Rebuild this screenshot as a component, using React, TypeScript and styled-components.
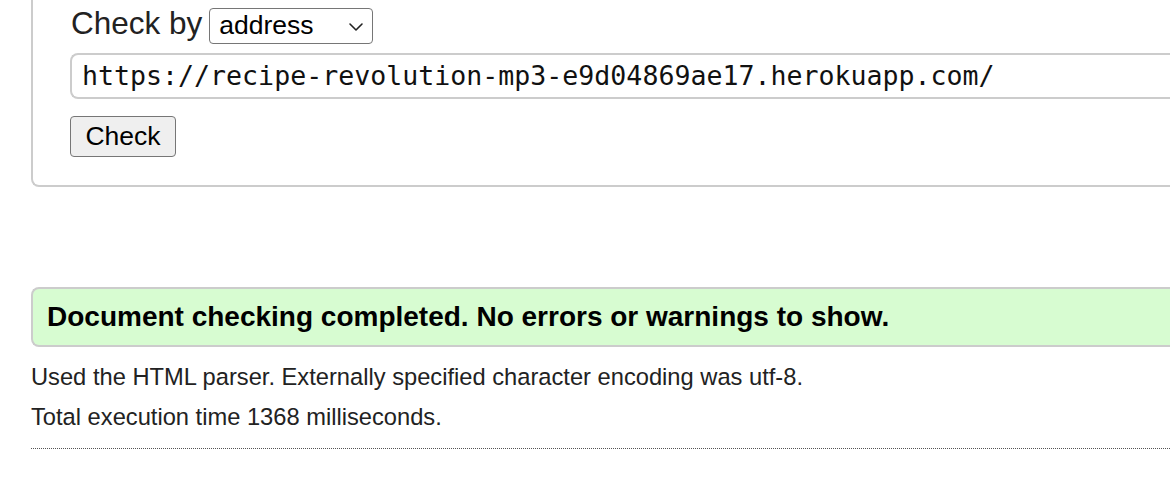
import React from "react"
import styled, { createGlobalStyle } from "styled-components"

const GlobalStyle = createGlobalStyle`
    html, body {
        margin: 0;
        padding: 0;
        background: #fff;
        overflow: hidden;
    }
    body {
        font-family: "Liberation Sans", Arial, Helvetica, sans-serif;
        color: #222;
    }
`

// ── Layout ────────────────────────────────────────────────────────────────────

const Page = styled.div`
    width: 1170px;
    height: 484px;
    padding-left: 31px;
    box-sizing: border-box;
`

const Form = styled.fieldset`
    margin: 0;
    padding: 5px 0 28px 37px;
    border: 2px solid #ccc;
    border-top: none;
    border-right: none;
    border-radius: 0 0 0 8px;
    display: flex;
    flex-direction: column;
    align-items: flex-start;
`

const CheckByRow = styled.div`
    display: flex;
    align-items: baseline;
    gap: 7px;
    margin-left: 1px;
`

const Label = styled.label`
    font-size: 31.5px;
    color: #222;
`

const SelectBox = styled.div`
    position: relative;
    box-sizing: border-box;
    width: 164px;
    height: 36px;
    border: 1px solid #767676;
    border-radius: 4px;
    background: #fff;
    display: flex;
    align-items: center;
    padding-left: 9px;
    font-size: 26.5px;
    color: #000;
`

const Chevron = styled.svg`
    position: absolute;
    right: 8px;
    top: 13px;
`

const UrlInput = styled.div`
    box-sizing: border-box;
    align-self: stretch;
    height: 46px;
    margin-top: 9px;
    border: 2px solid #ccc;
    border-right: none;
    border-radius: 8px 0 0 8px;
    padding-left: 10px;
    display: flex;
    align-items: center;
    font-family: "DejaVu Sans Mono", "Liberation Mono", monospace;
    font-size: 26.6px;
    color: #111;
    white-space: nowrap;
    overflow: hidden;
`

const CheckButton = styled.button`
    box-sizing: border-box;
    width: 106px;
    height: 41px;
    margin-top: 17px;
    border: 1px solid #767676;
    border-radius: 4px;
    background: #efefef;
    font-family: "Liberation Sans", Arial, sans-serif;
    font-size: 26.5px;
    color: #000;
    padding: 0;
`

const SuccessBox = styled.div`
    box-sizing: border-box;
    margin-top: 100px;
    height: 60px;
    border: 2px solid #ccc;
    border-right: none;
    border-radius: 8px 0 0 8px;
    background: #d7fcd1;
    padding-left: 14px;
    display: flex;
    align-items: center;
    font-size: 28px;
    font-weight: bold;
    color: #000;
    white-space: nowrap;
`

const Details = styled.div`
    margin-top: 17px;
    display: flex;
    flex-direction: column;
    gap: 14px;
    font-size: 23.7px;
    color: #222;
`

const DetailLine = styled.p`
    margin: 0;
    line-height: 26px;
    white-space: nowrap;
`

const Divider = styled.hr`
    margin: 18px 0 0;
    border: none;
    border-top: 1px dotted #555;
    height: 0;
`

export default function App() {
    return (
        <>
            <GlobalStyle />
            <Page>
                <Form>
                    <CheckByRow>
                        <Label>Check by</Label>
                        <SelectBox>
                            address
                            <Chevron width="16" height="10" viewBox="0 0 16 10" fill="none">
                                <path d="M2 2l6 6 6-6" stroke="#222" strokeWidth="1.6" strokeLinecap="round" strokeLinejoin="round" />
                            </Chevron>
                        </SelectBox>
                    </CheckByRow>
                    <UrlInput>https://recipe-revolution-mp3-e9d04869ae17.herokuapp.com/</UrlInput>
                    <CheckButton>Check</CheckButton>
                </Form>
                <SuccessBox>Document checking completed. No errors or warnings to show.</SuccessBox>
                <Details>
                    <DetailLine>Used the HTML parser. Externally specified character encoding was utf-8.</DetailLine>
                    <DetailLine>Total execution time 1368 milliseconds.</DetailLine>
                </Details>
                <Divider />
            </Page>
        </>
    )
}
